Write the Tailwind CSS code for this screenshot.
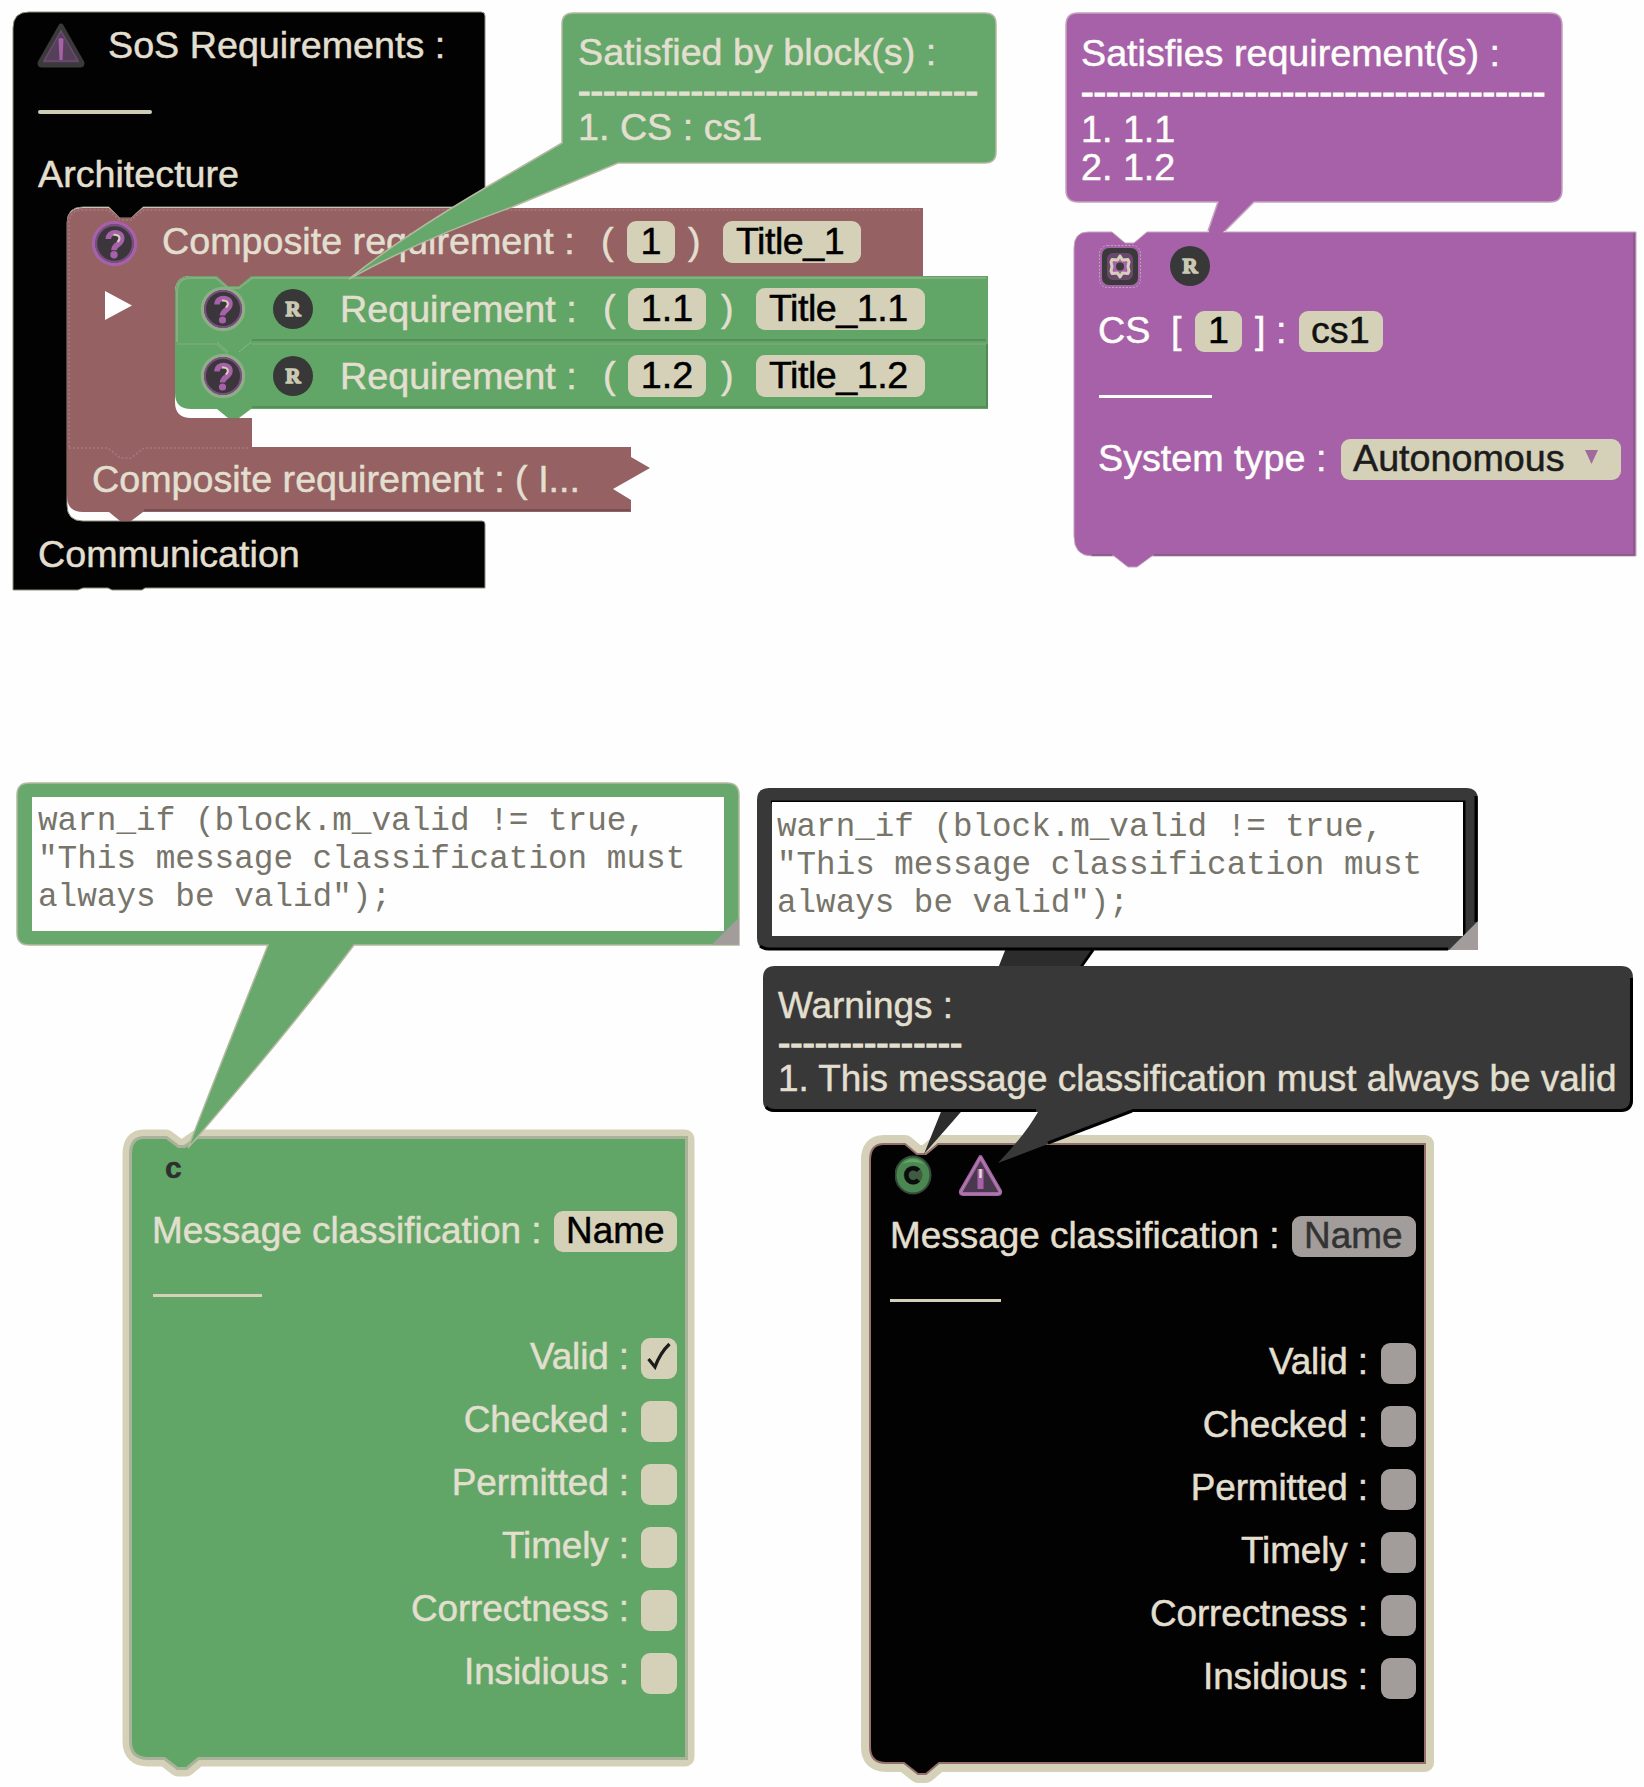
<!DOCTYPE html>
<html lang="en">
<head>
<meta charset="utf-8">
<title>SoS block workspace</title>
<script src="https://cdn.jsdelivr.net/npm/@tailwindcss/browser@4"></script>
</head>
<body class="bg-[#fefefe]">
<svg class="hidden">
  <defs>
    <symbol id="help" viewBox="0 0 46 46">
      <circle cx="23" cy="23" r="20.5" fill="#3a363b" stroke="currentColor" stroke-width="3.5"/>
      <circle cx="23" cy="23" r="18" fill="none" stroke="#7a4d80" stroke-width="2"/>
      <path d="M17 18.500c0-8 13-8 13-.5c0 6-7.500 6-7.500 11.500" fill="none" stroke="#a661a8" stroke-width="5.500"/>
      <path d="M22 14.500c6-.5 7.500 3.500 4 7" fill="none" stroke="#d5d1b9" stroke-width="2"/>
      <circle cx="22.500" cy="34" r="3.600" fill="#a661a8"/>
    </symbol>
    <symbol id="req" viewBox="0 0 40 40">
      <circle cx="20" cy="20" r="20" fill="#383838"/>
      <text x="20" y="27" text-anchor="middle" font-family="Liberation Serif, serif" font-weight="700" font-size="21" fill="#c9c9b4" stroke="#c9c9b4" stroke-width="1.400">R</text>
    </symbol>
    <symbol id="gear" viewBox="0 0 44 44">
      <rect x="4" y="4" width="36" height="37" rx="7" fill="#3a3a3a"/>
      <rect x="1.500" y="1.500" width="41" height="42" rx="8" fill="none" stroke="#c4a3bf" stroke-width="1" stroke-dasharray="2 1.500"/>
      <rect x="9" y="9" width="26" height="27" rx="6" fill="#6d486e"/>
      <path d="M22 12L24.500 16 30 15.500 31 18 30 22.500 31 27 30 29.500 24.500 29 22 33 19.500 29 14 29.500 13 27 14 22.500 13 18 14 15.500 19.500 16z" fill="#a661a8" stroke="#d5d1b9" stroke-width="3" stroke-linejoin="round"/>
      <circle cx="22" cy="22.500" r="4" fill="#3a3a3a"/>
    </symbol>
    <symbol id="grip" viewBox="0 0 30 30"><path d="M30 0V30H0z" fill="#a39c9c"/></symbol>
  </defs>
</svg>

<main class="relative w-[1644px] h-[1787px] overflow-hidden font-['Liberation_Sans',Arial,sans-serif] text-[37.7px] leading-none whitespace-nowrap text-[#e2dfcf] [-webkit-text-stroke:0.5px]">

  <!-- SoS requirements block -->
  <section class="absolute left-[13px] top-[12px] w-[473px] h-[579px]">
    <svg class="absolute inset-0 size-full overflow-visible" viewBox="13 12 473 579">
      <path d="M29 12H481Q485 12 485 16V207H143L131 218H120L109 207H83Q67 207 67 223V505Q67 521 83 521H482Q485 521 485 524V588H145L142 590H112L108 588H83L78 590H13V28Q13 12 29 12z" fill="#020202" stroke="#8d8a7c" stroke-width="1"/>
    </svg>
    <div class="relative flex flex-col">
      <div class="flex h-[66px] items-center pl-[24px]">
        <svg class="h-[45px] w-[48px]" viewBox="0 0 48 45"><path d="M24 3L45 40Q45 42 43 42H5Q3 42 3 40z" fill="#55405a" stroke="#3a3a3a" stroke-width="5" stroke-linejoin="round"/><path d="M24 8L41 38H7z" fill="none" stroke="#704874" stroke-width="1.500"/><path d="M21.500 16Q24 14 26.500 16L25.500 37H22.500z" fill="#a661a8"/></svg>
        <span class="ml-[23px] pt-[2px]">SoS Requirements :</span>
      </div>
      <div class="mt-[32px] ml-[25px] h-[4px] w-[114px] rounded-full bg-[#cfccb6]"></div>
      <div class="mt-[27px] flex h-[66px] items-center pl-[25px] pt-[2px]">Architecture</div>

      <div class="ml-[54px] mt-px flex flex-col">
        <!-- composite requirement, expanded -->
        <div class="relative h-[239px] w-[856px]">
          <svg class="absolute inset-0 size-full overflow-visible" viewBox="67 208 856 239">
            <path d="M83 208H109L120 218H131L143 208H923V276H254V288H215V276H191Q175 276 175 292V402Q175 418 191 418H252V448H67V224Q67 208 83 208z" fill="#956163"/>
            <path d="M69 447V224Q69 210 83 210H108L120 220H131L144 210H922" fill="none" stroke="#a97a80" stroke-width="1.500" stroke-dasharray="2 2"/>
          </svg>
          <div class="relative flex h-[66px] items-center pl-[24px] pt-px">
            <svg class="mt-[4px] size-[47px] text-[#a661a8]"><use href="#help"/></svg>
            <span class="ml-[24px] w-[439px] pt-px">Composite requirement :</span>
            <span class="w-[26px]">(</span>
            <span class="flex h-[42px] w-[48px] items-center justify-center rounded-[9px] bg-[#d5d1b9] text-black">1</span>
            <span class="ml-[13px] w-[35px]">)</span>
            <span class="flex h-[42px] w-[138px] items-center rounded-[9px] bg-[#d5d1b9] pl-[13px] tracking-[-0.5px] text-black">Title_1</span>
          </div>
          <div class="relative mt-[2px] flex">
            <svg class="mt-[15px] ml-[38px] h-[30px] w-[28px] shrink-0"><path d="M0 0L27 14.500 0 29z" fill="#fefefe"/></svg>
            <div class="ml-[42px] flex shrink-0 flex-col">
              <div class="relative flex h-[66px] w-[812px] items-center pl-[25px]">
                <svg class="absolute inset-0 size-full overflow-visible" viewBox="175 276 812 66"><path d="M191 276H217L228 286H239L251 276H988V342H251L239 352H228L217 342H175V292Q175 276 191 276z" fill="#61a667"/><path d="M177 342V292Q177 278 191 278H216L228 288H239L252 278H986" fill="none" stroke="#87ad80" stroke-width="2"/></svg>
                <svg class="relative size-[46px] text-[#8fae88]"><use href="#help"/></svg>
                <svg class="relative ml-[27px] size-[40px]"><use href="#req"/></svg>
                <span class="relative ml-[27px] w-[263px] pt-px">Requirement :</span>
                <span class="relative w-[25px]">(</span>
                <span class="relative flex h-[42px] w-[78px] items-center justify-center rounded-[9px] bg-[#d5d1b9] text-black">1.1</span>
                <span class="relative ml-[15px] w-[35px]">)</span>
                <span class="relative flex h-[42px] w-[169px] items-center rounded-[9px] bg-[#d5d1b9] pl-[13px] tracking-[-0.5px] text-black">Title_1.1</span>
              </div>
              <div class="relative mt-px flex h-[66px] w-[812px] items-center pl-[25px]">
                <svg class="absolute inset-0 size-full overflow-visible" viewBox="175 343 812 66"><path d="M175 342H217L228 352H239L251 342H988V409H251L239 418H228L217 409H191Q175 409 175 393z" fill="#61a667"/><path d="M177 344H216L228 354M252 344H986" fill="none" stroke="#7caa78" stroke-width="1.500"/><path d="M252 340H986M252 407H987V344" fill="none" stroke="#4a7a4e" stroke-width="1.200"/></svg>
                <svg class="relative size-[46px] text-[#8fae88]"><use href="#help"/></svg>
                <svg class="relative ml-[27px] size-[40px]"><use href="#req"/></svg>
                <span class="relative ml-[27px] w-[263px] pt-px">Requirement :</span>
                <span class="relative w-[25px]">(</span>
                <span class="relative flex h-[42px] w-[78px] items-center justify-center rounded-[9px] bg-[#d5d1b9] text-black">1.2</span>
                <span class="relative ml-[15px] w-[35px]">)</span>
                <span class="relative flex h-[42px] w-[169px] items-center rounded-[9px] bg-[#d5d1b9] pl-[13px] tracking-[-0.5px] text-black">Title_1.2</span>
              </div>
            </div>
          </div>
        </div>
        <!-- composite requirement, collapsed -->
        <div class="relative flex h-[64px] w-[564px] items-center pl-[25px] pt-[2px]">
          <svg class="absolute inset-0 size-full overflow-visible" viewBox="67 447 564 64"><path d="M67 447H631V457L650 468 613 489 631 500V512H143L131 521H120L109 512H83Q67 512 67 496z" fill="#956163"/><path d="M69 448H108L120 458H131L144 448H250" fill="none" stroke="#a97a80" stroke-width="1.500" stroke-dasharray="2 2"/><path d="M144 510H630" stroke="#6b4a4b" stroke-width="1.500"/></svg>
          <span class="relative">Composite requirement : ( I...</span>
        </div>
      </div>
      <div class="mt-[10px] flex h-[66px] items-center pl-[25px] pt-px">Communication</div>
    </div>
  </section>

  <!-- "Satisfied by" bubble -->
  <aside class="absolute left-[562px] top-[13px] h-[150px] w-[434px] pl-[16px] pt-[21px]">
    <svg class="absolute inset-0 size-full overflow-visible" viewBox="562 13 434 150"><path d="M573 13H985Q996 13 996 24V152Q996 163 985 163H618L512 207Q420 240 349 279Q400 238 485 188L562 143V24Q562 13 573 13z" fill="#66a76b" stroke="#b3b99f" stroke-width="1.500"/></svg>
    <div class="relative leading-[37.6px]"><p>Satisfied by block(s) :</p><p class="tracking-[-0.05px] [-webkit-text-stroke:1.4px]">--------------------------------</p><p>1. CS : cs1</p></div>
  </aside>

  <!-- constituent system block -->
  <section class="absolute left-[1074px] top-[231px] h-[336px] w-[562px] text-[#fdfdfa]">
    <svg class="absolute inset-0 size-full overflow-visible" viewBox="1074 231 562 336"><path d="M1088 232H1112L1125 243H1134L1147 232H1636V556H1152L1137 567H1128L1114 556H1092Q1074 556 1074 536V248Q1074 232 1088 232z" fill="#a661a8" stroke="#c4a3bf" stroke-width="1"/><path d="M1634 233V555H1154M1112 555H1092" fill="none" stroke="#86587f" stroke-width="1.500"/></svg>
    <div class="relative flex flex-col">
      <div class="flex h-[66px] items-center pl-[24px] pt-[4px]">
        <svg class="h-[44px] w-[44px]"><use href="#gear"/></svg>
        <svg class="ml-[28px] size-[40px]"><use href="#req"/></svg>
      </div>
      <div class="flex h-[68px] items-center pl-[24px]">
        <span class="w-[73px]">CS</span><span class="w-[24px]">[</span>
        <span class="flex h-[41px] w-[47px] items-center justify-center rounded-[9px] bg-[#d5d1b9] text-black">1</span>
        <span class="ml-[13px] w-[21px]">]</span><span class="w-[23px]">:</span>
        <span class="flex h-[41px] w-[84px] items-center rounded-[9px] bg-[#d5d1b9] pl-[12px] text-[#111]">cs1</span>
      </div>
      <div class="ml-[25px] mt-[30px] h-[3px] w-[113px] bg-[#fdfdfa]"></div>
      <div class="mt-[27px] flex h-[68px] items-center pl-[24px]">
        <span class="w-[218px]">System type</span><span class="w-[25px]">:</span>
        <span class="flex h-[41px] w-[280px] items-center rounded-[9px] bg-[#d5d1b9] pl-[12px] text-[#1c1c1c]">Autonomous<svg class="mb-[4px] ml-[20px] h-[14px] w-[13px]"><path d="M0 0H13L6.500 14z" fill="#a06a9c"/></svg></span>
      </div>
    </div>
  </section>
  <aside class="absolute left-[1066px] top-[13px] h-[189px] w-[496px] pl-[15px] pt-[21px] text-[#fdfdfa]">
    <svg class="absolute inset-0 size-full overflow-visible" viewBox="1066 13 496 189"><path d="M1218 201L1206 242 1221 234 1255 201z" fill="#a661a8"/><path d="M1208 231L1218 202H1078Q1066 202 1066 190V25Q1066 13 1078 13H1550Q1562 13 1562 25V190Q1562 202 1550 202H1254L1225 231" fill="#a661a8" stroke="#c4a3bf" stroke-width="1.500"/></svg>
    <div class="relative leading-[38px]"><p>Satisfies requirement(s) :</p><p class="[-webkit-text-stroke:1.4px]">-------------------------------------</p><p>1. 1.1</p><p>2. 1.2</p></div>
  </aside>

  <!-- valid message block -->
  <section class="absolute left-[132px] top-[1139px] h-[629px] w-[553px] text-[36.9px]">
    <svg class="absolute inset-0 size-full overflow-visible" viewBox="132 1139 553 629">
      <path d="M144 1139H166L178 1148H185L198 1139H685V1757H198L186 1767H178L165 1757H148Q132 1757 132 1741V1154Q132 1139 144 1139z" fill="none" stroke="#d5d1b9" stroke-width="19" stroke-linejoin="round"/>
      <path d="M144 1139H166L178 1148H185L198 1139H685V1757H198L186 1767H178L165 1757H148Q132 1757 132 1741V1154Q132 1139 144 1139z" fill="#61a667" stroke="#a9b399" stroke-width="6"/>
      <path d="M144 1139H166L178 1148H185L198 1139H685V1757H198L186 1767H178L165 1757H148Q132 1757 132 1741V1154Q132 1139 144 1139z" fill="#61a667"/>
    </svg>
    <div class="relative flex flex-col">
      <div class="flex h-[58px] items-center pl-[33px] text-[30px] font-bold text-[#2e2e2e]">c</div>
      <div class="flex h-[68px] items-center pl-[20px]">
        <span class="w-[402px]">Message classification :</span>
        <span class="flex h-[41px] w-[123px] items-center rounded-[9px] bg-[#d5d1b9] pl-[12px] text-black">Name</span>
      </div>
      <div class="ml-[21px] mt-[29px] h-[3px] w-[109px] bg-[#d5d1b9]"></div>
      <div class="mt-[30px] flex flex-col pr-[8px] tracking-[-0.1px]">
        <div class="flex h-[63px] items-center justify-end"><span class="pb-[2px]">Valid :</span><span class="ml-[12px] flex h-[41px] w-[36px] items-center justify-center rounded-[9px] bg-[#d5d1b9]"><svg class="mb-[6px] h-[28px] w-[24px]" viewBox="0 0 24 28"><path d="M1.500 17L8 25Q13 11 22.500 2" fill="none" stroke="#1c1c1c" stroke-width="3.200"/></svg></span></div>
        <div class="flex h-[63px] items-center justify-end"><span class="pb-[2px]">Checked :</span><span class="ml-[12px] h-[41px] w-[36px] rounded-[9px] bg-[#d5d1b9]"></span></div>
        <div class="flex h-[63px] items-center justify-end"><span class="pb-[2px]">Permitted :</span><span class="ml-[12px] h-[41px] w-[36px] rounded-[9px] bg-[#d5d1b9]"></span></div>
        <div class="flex h-[63px] items-center justify-end"><span class="pb-[2px]">Timely :</span><span class="ml-[12px] h-[41px] w-[36px] rounded-[9px] bg-[#d5d1b9]"></span></div>
        <div class="flex h-[63px] items-center justify-end"><span class="pb-[2px]">Correctness :</span><span class="ml-[12px] h-[41px] w-[36px] rounded-[9px] bg-[#d5d1b9]"></span></div>
        <div class="flex h-[63px] items-center justify-end"><span class="pb-[2px]">Insidious :</span><span class="ml-[12px] h-[41px] w-[36px] rounded-[9px] bg-[#d5d1b9]"></span></div>
      </div>
    </div>
  </section>
  <aside class="absolute left-[17px] top-[783px] h-[162px] w-[722px] px-[15px] py-[14px]">
    <svg class="absolute inset-0 size-full overflow-visible" viewBox="17 783 722 162"><path d="M29 783H727Q739 783 739 795V945H354Q290 1030 188 1148Q230 1040 268 945H29Q17 945 17 933V795Q17 783 29 783z" fill="#68a86d" stroke="#b3b99f" stroke-width="1.500"/></svg>
    <div class="relative h-[134px] bg-[#fefefe] pl-[6px] pt-[6px] font-['Liberation_Mono',monospace] text-[32.7px] leading-[37.8px] text-[#77746a] [-webkit-text-stroke:0px]"><p>warn_if (block.m_valid != true,</p><p>"This message classification must</p><p>always be valid");</p></div>
    <svg class="absolute right-0 bottom-0 h-[28px] w-[27px]"><use href="#grip"/></svg>
  </aside>

  <!-- invalid message block -->
  <section class="absolute left-[870px] top-[1144px] h-[629px] w-[555px] text-[36.9px]">
    <svg class="absolute inset-0 size-full overflow-visible" viewBox="870 1144 555 629">
      <path d="M884 1144H905L917 1154H926L938 1144H1425V1763H939L926 1774H918L904 1763H886Q870 1763 870 1747V1160Q870 1144 884 1144z" fill="#d5d1b9" stroke="#d5d1b9" stroke-width="18" stroke-linejoin="round"/>
      <path d="M884 1144H905L917 1154H926L938 1144H1425V1763H939L926 1774H918L904 1763H886Q870 1763 870 1747V1160Q870 1144 884 1144z" fill="#020202" stroke="#956f6b" stroke-width="2"/>
    </svg>
    <div class="relative flex flex-col">
      <div class="flex h-[58px] items-center pl-[25px] pt-[4px]">
        <svg class="h-[40px] w-[38px]" viewBox="0 0 38 40"><ellipse cx="18" cy="20" rx="17.500" ry="18.500" fill="#4b8751" stroke="#33493a" stroke-width="2"/><path d="M7 9Q18-1 29 9Q18 5 7 9z" fill="#61a667"/><circle cx="18" cy="20" r="9.500" fill="#3f5c43"/><path d="M23.500 15.500A7 7 0 1 0 23.500 25" fill="none" stroke="#0c0c0c" stroke-width="4.500"/></svg>
        <svg class="ml-[25px] h-[43px] w-[45px]" viewBox="0 0 45 43"><path d="M22.500 3L42 37Q43 40 40 40H5Q2 40 3 37z" fill="#4a394e" stroke="#a661a8" stroke-width="4" stroke-linejoin="round"/><path d="M22.500 3L42 37Q43 40 40 40H5Q2 40 3 37z" fill="none" stroke="#a9959f" stroke-width="1" stroke-linejoin="round"/><path d="M22.500 15V35" stroke="#a661a8" stroke-width="6"/><path d="M22.500 15V24" stroke="#e2dfcf" stroke-width="2.500"/></svg>
      </div>
      <div class="flex h-[68px] items-center pl-[20px]">
        <span class="w-[402px]">Message classification :</span>
        <span class="flex h-[41px] w-[124px] items-center rounded-[9px] bg-[#a29d9a] pl-[12px] text-[#333]">Name</span>
      </div>
      <div class="ml-[20px] mt-[29px] h-[3px] w-[111px] bg-[#d5d1b9]"></div>
      <div class="mt-[30px] flex flex-col pr-[9px] tracking-[-0.1px]">
        <div class="flex h-[63px] items-center justify-end"><span class="pb-[2px]">Valid :</span><span class="ml-[13px] h-[41px] w-[35px] rounded-[9px] bg-[#a29d9a]"></span></div>
        <div class="flex h-[63px] items-center justify-end"><span class="pb-[2px]">Checked :</span><span class="ml-[13px] h-[41px] w-[35px] rounded-[9px] bg-[#a29d9a]"></span></div>
        <div class="flex h-[63px] items-center justify-end"><span class="pb-[2px]">Permitted :</span><span class="ml-[13px] h-[41px] w-[35px] rounded-[9px] bg-[#a29d9a]"></span></div>
        <div class="flex h-[63px] items-center justify-end"><span class="pb-[2px]">Timely :</span><span class="ml-[13px] h-[41px] w-[35px] rounded-[9px] bg-[#a29d9a]"></span></div>
        <div class="flex h-[63px] items-center justify-end"><span class="pb-[2px]">Correctness :</span><span class="ml-[13px] h-[41px] w-[35px] rounded-[9px] bg-[#a29d9a]"></span></div>
        <div class="flex h-[63px] items-center justify-end"><span class="pb-[2px]">Insidious :</span><span class="ml-[13px] h-[41px] w-[35px] rounded-[9px] bg-[#a29d9a]"></span></div>
      </div>
    </div>
  </section>
  <aside class="absolute left-[757px] top-[788px] h-[162px] w-[721px] px-[15px] py-[14px]">
    <svg class="absolute inset-0 size-full overflow-visible" viewBox="757 788 721 162"><path d="M1094 948Q1030 1035 924 1154Q970 1040 1006 948z" fill="#2c2c2c"/><path d="M769 788H1466Q1478 788 1478 800V950H769Q757 950 757 938V800Q757 788 769 788z" fill="#383838"/><path d="M771 802H1464V936M760 946Q764 949 769 949H1448M1093 950L1081 967M1476 796V922" fill="none" stroke="#000" stroke-width="3"/></svg>
    <div class="relative h-[134px] bg-[#fefefe] pl-[5px] pt-[7px] font-['Liberation_Mono',monospace] text-[32.6px] leading-[37.8px] text-[#77746a] [-webkit-text-stroke:0px]"><p>warn_if (block.m_valid != true,</p><p>"This message classification must</p><p>always be valid");</p></div>
    <svg class="absolute right-0 bottom-0 size-[29px]"><use href="#grip"/></svg>
  </aside>
  <aside class="absolute left-[763px] top-[966px] h-[146px] w-[870px] pl-[15px] pt-[22px] text-[36.9px]">
    <svg class="absolute inset-0 size-full overflow-visible" viewBox="763 966 870 146"><path d="M775 966H1621Q1633 966 1633 978V1100Q1633 1112 1621 1112H1132Q1080 1132 998 1163Q1025 1135 1038 1112H775Q763 1112 763 1100V978Q763 966 775 966z" fill="#383838"/><path d="M766 1107Q769 1110.500 775 1110.500H1036M1132 1110.500H1621Q1631 1110 1631.500 1100V978M1132 1111L1048 1143" fill="none" stroke="#000" stroke-width="3"/></svg>
    <div class="relative leading-[36.700px]"><p>Warnings :</p><p class="[-webkit-text-stroke:1.4px]">---------------</p><p class="tracking-[-0.03px]">1. This message classification must always be valid</p></div>
  </aside>
</main>
</body>
</html>
